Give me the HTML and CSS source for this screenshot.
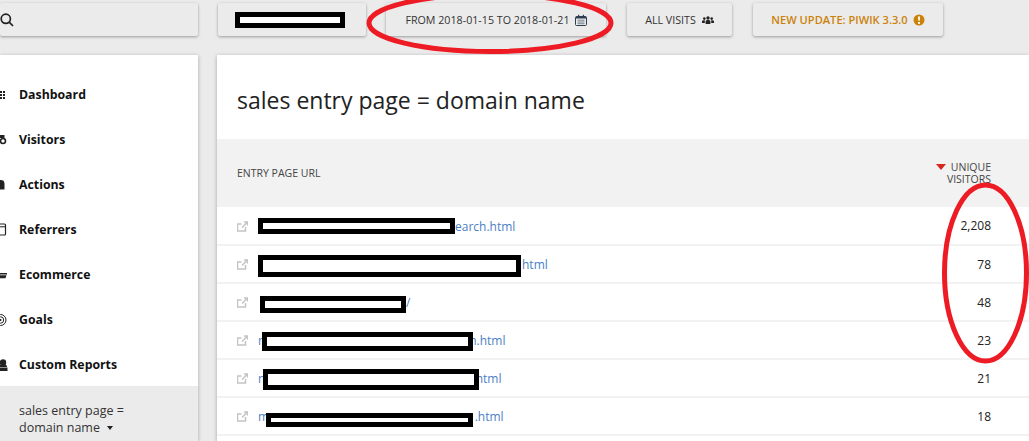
FILE: index.html
```html
<!DOCTYPE html>
<html lang="en">
<head>
<meta charset="utf-8">
<title>Piwik</title>
<link rel="stylesheet" href="styles.css">
</head>
<body>
<header class="topbar">
  <div class="btn search"><svg class="ico-search" viewBox="0 0 14 14"><circle cx="5.800" cy="5.800" r="4.600"/><path d="M9.200 9.200 13 13"/></svg></div>
  <div class="btn site"><span class="redact redact-site"></span></div>
  <div class="btn date">FROM 2018-01-15 TO 2018-01-21
    <svg class="ico-cal" viewBox="0 0 12 12"><path d="M1.500 2.500h9a1 1 0 0 1 1 1v7a1 1 0 0 1-1 1h-9a1 1 0 0 1-1-1v-7a1 1 0 0 1 1-1z" fill="none" stroke="#2c3e50" stroke-width="1"/><path d="M1 2.500h10v2H1zM3 .8h1.200v2H3zM7.800.8H9v2H7.800z" fill="#2c3e50"/><path d="M2.500 6.200h7M2.500 8h7M2.500 9.700h7" stroke="#5b6b7b" stroke-width=".8"/></svg>
  </div>
  <div class="btn visits">ALL VISITS
    <svg class="ico-users" viewBox="0 0 12 8"><circle cx="6" cy="2" r="1.700"/><circle cx="2.300" cy="2.600" r="1.300"/><circle cx="9.700" cy="2.600" r="1.300"/><path d="M3.600 8V5.600c0-1 1-1.500 2.400-1.500s2.400.5 2.400 1.500V8zM0 7V5.400c0-.8.8-1.200 2.800-1.200v2.800zM12 7V5.400c0-.8-.8-1.200-2.800-1.200v2.800z"/></svg>
  </div>
  <div class="btn update">NEW UPDATE: PIWIK 3.3.0
    <svg class="ico-alert" viewBox="0 0 12 12"><circle cx="6" cy="6" r="5.500" fill="#cb8208"/><path d="M5 2.500h2l-.3 4.300H5.300zM5 8h2v1.800H5z" fill="#fff"/></svg>
  </div>
</header>
<div class="layout">
  <nav class="sidebar">
    <ul class="menu">
      <li><svg class="mi" viewBox="0 0 14 14"><path d="M6 3h2v2H6zM9 3h2v2H9zM6 6h2v2H6zM9 6h2v2H9zM6 9h2v2H6zM9 9h2v2H9z"/></svg>Dashboard</li>
      <li><svg class="mi" viewBox="0 0 14 14"><circle cx="9" cy="8" r="2.500" fill="none" stroke="#222" stroke-width="1.600"/><path d="M6 2h4.500v3H6z"/></svg>Visitors</li>
      <li><svg class="mi" viewBox="0 0 14 14"><path d="M2 11.500V7c0-3 1.500-5 5-5s3.500 3 3.500 5v4.500z"/></svg>Actions</li>
      <li><svg class="mi" viewBox="0 0 14 14"><rect x="2" y="1" width="9.500" height="11" rx="1" fill="none" stroke="#222" stroke-width="1.200"/><path d="M2 3.800h9.500" stroke="#222"/></svg>Referrers</li>
      <li><svg class="mi" viewBox="0 0 14 14"><path d="M2 5h11v1.500H2zM4 7.200h8.500l-1 3H5z"/></svg>Ecommerce</li>
      <li><svg class="mi" viewBox="0 0 14 14"><circle cx="6.500" cy="7" r="5.500" fill="none" stroke="#222"/><circle cx="6.500" cy="7" r="3.200" fill="none" stroke="#222"/><circle cx="6.500" cy="7" r="1"/></svg>Goals</li>
      <li><svg class="mi" viewBox="0 0 14 14"><path d="M1 9.500h12.500V13H1z"/><circle cx="9" cy="4.500" r="3.200"/><path d="M5 9a4 3 0 0 1 8 0z"/></svg>Custom Reports</li>
    </ul>
    <div class="submenu">sales entry page = domain name <span class="caret"></span></div>
  </nav>
  <main class="content">
    <h1 class="title">sales entry page = domain name</h1>
    <table class="report">
      <thead>
        <tr><th class="col-url">ENTRY PAGE URL</th><th class="col-num"><span class="sort"></span>UNIQUE VISITORS</th></tr>
      </thead>
      <tbody>
        <tr><td><svg class="ext" viewBox="0 0 11 11"><path d="M8.500 6v4h-8V3h4M5 6.500 10 1.500M7 1h3.500v3.500"/></svg><a class="r1"><span class="redact"></span>earch.html</a></td><td class="num">2,208</td></tr>
        <tr><td><svg class="ext" viewBox="0 0 11 11"><path d="M8.500 6v4h-8V3h4M5 6.500 10 1.500M7 1h3.500v3.500"/></svg><a class="r2"><span class="redact"></span>html</a></td><td class="num">78</td></tr>
        <tr><td><svg class="ext" viewBox="0 0 11 11"><path d="M8.500 6v4h-8V3h4M5 6.500 10 1.500M7 1h3.500v3.500"/></svg><a class="r3"><span class="redact"></span>/</a></td><td class="num">48</td></tr>
        <tr><td><svg class="ext" viewBox="0 0 11 11"><path d="M8.500 6v4h-8V3h4M5 6.500 10 1.500M7 1h3.500v3.500"/></svg><a class="r4">m<span class="redact"></span>n.html</a></td><td class="num">23</td></tr>
        <tr><td><svg class="ext" viewBox="0 0 11 11"><path d="M8.500 6v4h-8V3h4M5 6.500 10 1.500M7 1h3.500v3.500"/></svg><a class="r5">m<span class="redact"></span>html</a></td><td class="num">21</td></tr>
        <tr><td><svg class="ext" viewBox="0 0 11 11"><path d="M8.500 6v4h-8V3h4M5 6.500 10 1.500M7 1h3.500v3.500"/></svg><a class="r6">m<span class="redact"></span>.html</a></td><td class="num">18</td></tr>
      </tbody>
    </table>
  </main>
</div>
<svg class="annot" viewBox="0 0 1029 441" aria-hidden="true">
  <ellipse cx="490" cy="23" rx="121" ry="28.500"/>
  <ellipse cx="985.500" cy="273" rx="41" ry="88"/>
</svg>
</body>
</html>
```
FILE: styles.css
```css
* { box-sizing: border-box; }
html, body { margin: 0; height: 100%; }
body {
  width: 1029px; height: 441px; overflow: hidden; position: relative;
  background: #ebebeb; color: #222;
  font-family: "Open Sans", "Liberation Sans", sans-serif; font-size: 13px;
}
.topbar { display: flex; height: 55px; padding-top: 3px; align-items: flex-start; }
.btn {
  height: 33px; display: flex; align-items: center; justify-content: center;
  background: #ebebeb; border-radius: 2px; font-size: 10.700px; color: #333;
  box-shadow: 0 1px 3px rgba(0,0,0,.35);
}
.search { width: 198px; margin-right: 20px; justify-content: flex-start; }
.site { width: 148px; margin-right: 20px; justify-content: flex-start; padding-left: 17px; }
.date { width: 220px; margin-right: 21px; gap: 5px; }
.visits { width: 105px; margin-right: 21px; gap: 6px; }
.update { width: 190px; gap: 5px; color: #cb8208; font-weight: 600; font-size: 11.100px; }
.ico-search { width: 14px; height: 14px; fill: none; stroke: #222; stroke-width: 1.700; }
.ico-cal { width: 12px; height: 12px; }
.ico-users { width: 12px; height: 8px; fill: #222; }
.ico-alert { width: 12px; height: 12px; }

.redact { display: block; position: relative; flex: none; background: #fff; border: 5px solid #000; }
.redact-site { width: 110px; height: 16px; }

.layout { display: grid; grid-template-columns: 198px 812px; column-gap: 19px; width: 1029px; }
.sidebar { background: #fff; height: 386px; box-shadow: 0 1px 4px rgba(0,0,0,.3); }
.menu { list-style: none; margin: 0; padding: 17px 0 0; }
.menu li {
  height: 45px; display: flex; align-items: center; gap: 11px; margin-left: -6px;
  font-size: 12.300px; font-weight: 700; color: #111;
}
.mi { width: 14px; height: 14px; fill: #222; flex: none; }
.submenu {
  background: #ebebeb; padding: 16px 40px 0 19px; height: 55px; margin-top: -1px;
  font-size: 12.500px; line-height: 17px; color: #333;
}
.caret { display: inline-block; margin-left: 4px; vertical-align: 2px; border: 3px solid transparent; border-top: 4px solid #222; border-bottom: 0; }

.content { background: #fff; height: 386px; width: 812px; box-shadow: 0 1px 4px rgba(0,0,0,.3); overflow: hidden; }
.title { margin: 0; height: 84px; padding: 29px 0 0 20px; font-size: 23px; font-weight: 400; line-height: 32px; color: #222; }
.report { width: 100%; border-collapse: collapse; table-layout: fixed; }
.report thead tr { height: 68px; background: #f2f2f2; }
.report th { font-weight: 400; font-size: 10.500px; line-height: 12px; color: #444; }
.col-url { text-align: left; padding-left: 20px; }
.col-num { width: 120px; text-align: right; padding: 0 38px 0 10px; }
.sort { display: inline-block; margin-right: 5px; vertical-align: 1px; border: 5px solid transparent; border-top: 6px solid #d4291c; border-bottom: 0; }
.report td { height: 38px; padding: 0; border-bottom: 2px solid #f2f2f2; font-size: 12px; }
.report td:first-child { padding-left: 20px; }
.report .num { text-align: right; padding-right: 38px; color: #222; }
.ext { width: 11px; height: 11px; margin-right: 10px; vertical-align: middle; fill: none; stroke: #c4c4c4; stroke-width: 1.500; }
.report a { color: #4a7fc4; display: inline-flex; align-items: center; vertical-align: middle; }
.r1 .redact { width: 197px; height: 16px; }
.r2 .redact { width: 263px; height: 22px; top: 2px; margin-right: 1px; }
.r3 .redact { width: 146px; height: 17px; margin-left: 2px; top: 2px; }
.r4 .redact { width: 211px; height: 19px; margin-left: -7.400px; margin-right: -3.500px; top: 1px; }
.r5 .redact { width: 216px; height: 21px; margin-left: -6.400px; margin-right: -3px; top: 1px; }
.r6 .redact { width: 207px; height: 14px; margin-left: -3.400px; margin-right: 2px; top: 3px; }

.annot { position: absolute; left: 0; top: 0; width: 1029px; height: 441px; fill: none; stroke: #ed1c24; stroke-width: 5; pointer-events: none; }
```
